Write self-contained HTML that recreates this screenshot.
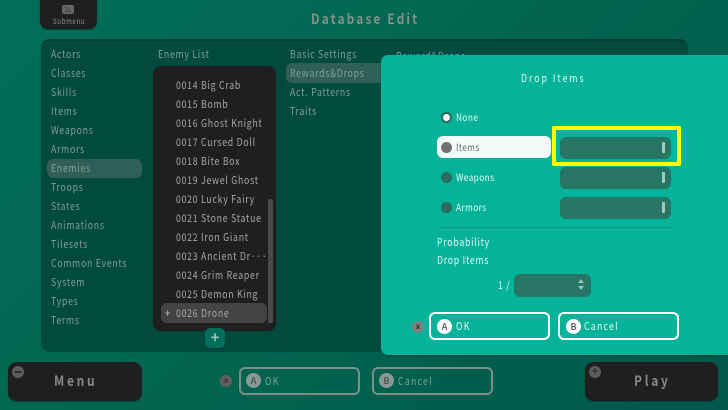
<!DOCTYPE html>
<html><head><meta charset="utf-8">
<style>
html,body{margin:0;padding:0;width:728px;height:410px;overflow:hidden}
#r{position:relative;width:728px;height:410px;overflow:hidden;background:linear-gradient(135deg,#016f59 0%,#016650 45%,#01574a 100%);font-family:"Noto Sans CJK JP","Liberation Sans",sans-serif}
#r div{position:absolute;box-sizing:border-box}
.t{white-space:nowrap;line-height:14px;height:14px;font-size:10.5px;letter-spacing:.9px;color:#869f9a;transform:translateY(1px) scaleX(.83);transform-origin:0 50%}
.l{color:#a9a9a9}
.w{color:#e6faf6}
.t.f9{font-size:10px;letter-spacing:.5px;transform:scaleX(.83)}
.bt{letter-spacing:1.5px}
.sel{background:#2f5f56;border-radius:6px}
.drop{background:#267565;border-radius:6px;width:111px;height:22px;left:560px}
.drop i{position:absolute;right:6px;top:5px;width:3px;height:11px;background:#a5c9c1;border-radius:1px}
.rad{width:11px;height:11px;border-radius:50%;background:#2d6a5f;left:441px}
.btn{border:2px solid #fff;border-radius:6px;height:28px;width:121px;top:312px}
.dbtn{border:2px solid #7c8f8a;border-radius:6px;height:28px;width:121px;top:367px}
.c{width:15px;height:15px;border-radius:50%;background:#fff;color:#666;font-size:9px;font-weight:700;text-align:center;line-height:15px;letter-spacing:0}
.dc{background:#8a9a96;color:#4a5a56}
.x{width:12px;height:12px;border-radius:50%;background:#5f5f5f;color:#333;font-size:8px;font-weight:700;text-align:center;line-height:11px}
.dark{background:#1f1f1f;border-radius:8px;box-shadow:0 1px 1px #01433a}
.t.h{height:18px;line-height:18px;font-size:14px;font-weight:700;color:#888;transform:scaleX(.855)}
</style></head><body>
<div id="r">
<div class="dark" style="left:40px;top:-8px;width:57px;height:37px"></div>
<div style="left:62px;top:5px;width:12px;height:9px;background:#666;border-radius:2px;color:#2a2a2a;font-size:6px;line-height:9px;text-align:center">ZL</div>
<div class="t" style="left:53px;top:14px;font-size:7.5px;letter-spacing:.7px;color:#8f8f8f">Submenu</div>
<div class="t h" style="left:311px;top:10px;letter-spacing:2.45px;color:#85908d">Database Edit</div>

<div style="left:41px;top:39px;width:647px;height:313px;background:#014a3e;border-radius:9px;border-top:2px solid #013a31"></div>
<div style="left:146px;top:45px;width:1px;height:300px;background:#01413a"></div>
<div style="left:282px;top:45px;width:1px;height:300px;background:#01413a"></div>

<div class="sel" style="left:47px;top:159px;width:95px;height:19px"></div>
<div class="t" style="left:51px;top:47px">Actors</div>
<div class="t" style="left:51px;top:66px">Classes</div>
<div class="t" style="left:51px;top:85px">Skills</div>
<div class="t" style="left:51px;top:104px">Items</div>
<div class="t" style="left:51px;top:123px">Weapons</div>
<div class="t" style="left:51px;top:142px">Armors</div>
<div class="t" style="left:51px;top:161px">Enemies</div>
<div class="t" style="left:51px;top:180px">Troops</div>
<div class="t" style="left:51px;top:199px">States</div>
<div class="t" style="left:51px;top:218px">Animations</div>
<div class="t" style="left:51px;top:237px">Tilesets</div>
<div class="t" style="left:51px;top:256px">Common Events</div>
<div class="t" style="left:51px;top:275px">System</div>
<div class="t" style="left:51px;top:294px">Types</div>
<div class="t" style="left:51px;top:313px">Terms</div>

<div class="t" style="left:158px;top:47px">Enemy List</div>
<div class="dark" style="left:153px;top:66px;width:123px;height:265px"></div>
<div class="t l" style="left:176px;top:78px">0014 Big Crab</div>
<div class="t l" style="left:176px;top:97px">0015 Bomb</div>
<div class="t l" style="left:176px;top:116px">0016 Ghost Knight</div>
<div class="t l" style="left:176px;top:135px">0017 Cursed Doll</div>
<div class="t l" style="left:176px;top:154px">0018 Bite Box</div>
<div class="t l" style="left:176px;top:173px">0019 Jewel Ghost</div>
<div class="t l" style="left:176px;top:192px">0020 Lucky Fairy</div>
<div class="t l" style="left:176px;top:211px">0021 Stone Statue</div>
<div class="t l" style="left:176px;top:230px">0022 Iron Giant</div>
<div class="t l" style="left:176px;top:249px">0023 Ancient Dr···</div>
<div class="t l" style="left:176px;top:268px">0024 Grim Reaper</div>
<div class="t l" style="left:176px;top:287px">0025 Demon King</div>
<div style="left:161px;top:303px;width:106px;height:20px;background:#444;border-radius:6px"></div>
<div class="t l" style="left:165px;top:306px;font-weight:700">+</div>
<div class="t l" style="left:176px;top:306px">0026 Drone</div>
<div style="left:268px;top:199px;width:5px;height:124px;background:#4a4a4a;border-radius:2px"></div>
<div style="left:205px;top:328px;width:20px;height:20px;background:#026f5c;border-radius:5px;color:#9fc0b9;font-size:15px;font-weight:700;line-height:19px;text-align:center;box-shadow:0 1px 1px #013a31">+</div>

<div class="t" style="left:290px;top:47px">Basic Settings</div>
<div class="sel" style="left:286px;top:63px;width:100px;height:20px"></div>
<div class="t" style="left:290px;top:66px">Rewards&amp;Drops</div>
<div class="t" style="left:290px;top:85px">Act. Patterns</div>
<div class="t" style="left:290px;top:104px">Traits</div>
<div class="t" style="left:396px;top:49px">Reward&amp;Drops</div>

<div style="left:381px;top:55px;width:360px;height:300px;background:#05b399;border-radius:7px;box-shadow:0 1px 1px #013a31"></div>
<div class="t w" style="left:521px;top:71px;letter-spacing:2.4px">Drop Items</div>

<div style="left:441px;top:112px;width:11px;height:11px;border-radius:50%;background:#fff;border:2.5px solid #2d6a5f"></div>
<div class="t w f9" style="left:456px;top:110px">None</div>
<div style="left:437px;top:136px;width:114px;height:22px;background:#f2fcfb;border-radius:6px"></div>
<div class="rad" style="top:142px;background:#717171"></div>
<div class="t f9" style="left:456px;top:140px;color:#5c6a67">Items</div>
<div class="rad" style="top:172px"></div>
<div class="t w f9" style="left:456px;top:170px">Weapons</div>
<div class="rad" style="top:202px"></div>
<div class="t w f9" style="left:456px;top:200px">Armors</div>

<div class="drop" style="top:137px"><i></i></div>
<div class="drop" style="top:167px"><i></i></div>
<div class="drop" style="top:197px"><i></i></div>
<div style="left:552px;top:126px;width:129px;height:40px;border:4px solid #ffff00;border-radius:2px"></div>

<div style="left:437px;top:227px;width:237px;height:1px;background:#1d9683"></div>
<div class="t w" style="left:437px;top:235px">Probability</div>
<div class="t w" style="left:437px;top:253px">Drop Items</div>
<div class="t w" style="left:498px;top:278px">1 /</div>
<div style="left:514px;top:274px;width:77px;height:23px;background:#267565;border-radius:6px"></div>
<div style="left:578px;top:279px;width:0;height:0;border-left:3px solid transparent;border-right:3px solid transparent;border-bottom:4px solid #9cc4bb"></div>
<div style="left:578px;top:286px;width:0;height:0;border-left:3px solid transparent;border-right:3px solid transparent;border-top:4px solid #9cc4bb"></div>

<div class="x" style="left:412px;top:321px;background:#808080">x</div>
<div class="btn" style="left:429px"></div>
<div class="c" style="left:437px;top:319px">A</div>
<div class="t w bt" style="left:456px;top:319px">OK</div>
<div class="btn" style="left:558px"></div>
<div class="c" style="left:566px;top:319px">B</div>
<div class="t w bt" style="left:584px;top:319px">Cancel</div>

<div class="dark" style="left:8px;top:362px;width:134px;height:39px;border-radius:9px"></div>
<div style="left:12px;top:366px;width:12px;height:12px;border-radius:50%;background:#5c5c5c"></div>
<div style="left:15px;top:371px;width:6px;height:2px;background:#2a2a2a"></div>
<div class="t h" style="left:54px;top:372px;letter-spacing:3.2px">Menu</div>

<div class="x" style="left:220px;top:375px">x</div>
<div class="dbtn" style="left:239px"></div>
<div class="c dc" style="left:246px;top:373px">A</div>
<div class="t bt" style="left:265px;top:374px">OK</div>
<div class="dbtn" style="left:372px"></div>
<div class="c dc" style="left:379px;top:373px">B</div>
<div class="t bt" style="left:398px;top:374px">Cancel</div>

<div class="dark" style="left:585px;top:362px;width:133px;height:39px;border-radius:9px"></div>
<div style="left:589px;top:366px;width:12px;height:12px;border-radius:50%;background:#5c5c5c;color:#2a2a2a;font-size:11px;line-height:11px;text-align:center;font-weight:700">+</div>
<div class="t h" style="left:634px;top:372px;letter-spacing:3.2px">Play</div>
</div>
</body></html>
